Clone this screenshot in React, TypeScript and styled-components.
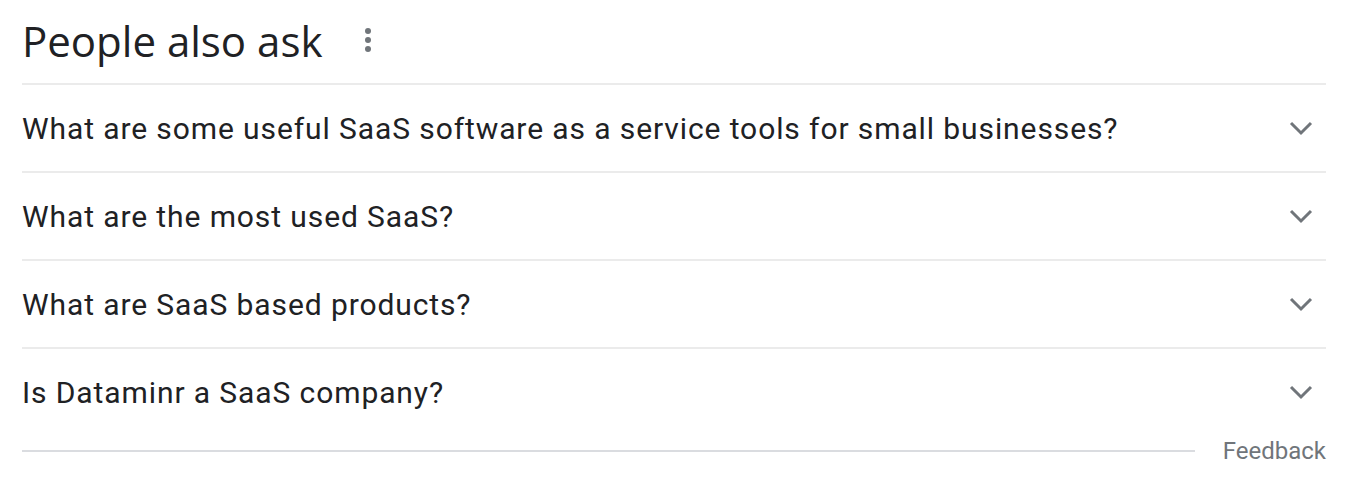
import styled, { createGlobalStyle } from 'styled-components';

const GlobalStyle = createGlobalStyle`
  body {
    margin: 0;
    background: #fff;
    font-family: Roboto, Arial, sans-serif;
  }
`;

const Wrapper = styled.section`
  width: 1304px;
  padding-left: 22px;
`;

const Header = styled.div`
  display: flex;
  align-items: center;
  height: 83px;
  border-bottom: 2px solid #ebebeb;
`;

const Title = styled.h2`
  margin: 0 0 2px 0;
  font-family: 'Open Sans', Roboto, sans-serif;
  font-weight: 400;
  font-size: 42px;
  color: #202124;
`;

const MoreButton = styled.button`
  display: flex;
  align-items: center;
  justify-content: center;
  margin-left: 30px;
  margin-bottom: 4px;
  width: 32px;
  height: 32px;
  padding: 0;
  border: none;
  background: none;
`;

const Question = styled.div`
  display: flex;
  align-items: center;
  justify-content: space-between;
  height: 86px;
  border-bottom: 2px solid #ebebeb;

  &:last-of-type {
    border-bottom: none;
  }
`;

const QuestionText = styled.span`
  font-size: 30px;
  letter-spacing: 0.9px;
  color: #202124;
`;

const Chevron = styled.svg`
  width: 24px;
  height: 16px;
  margin-right: 13px;
`;

const Footer = styled.div`
  display: flex;
  align-items: center;
  gap: 28px;
  margin-top: 2px;
`;

const Rule = styled.div`
  flex: 1;
  height: 2px;
  background: #dadce0;
`;

const Feedback = styled.span`
  font-size: 24px;
  color: #70757a;
`;

const questions = [
  'What are some useful SaaS software as a service tools for small businesses?',
  'What are the most used SaaS?',
  'What are SaaS based products?',
  'Is Dataminr a SaaS company?',
];

const Dots = () => (
  <svg width="8" height="26" viewBox="0 0 8 26">
    <circle cx="4" cy="4" r="3" fill="#70757a" />
    <circle cx="4" cy="13" r="3" fill="#70757a" />
    <circle cx="4" cy="22" r="3" fill="#70757a" />
  </svg>
);

const App = () => (
  <Wrapper>
    <GlobalStyle />
    <Header>
      <Title>People also ask</Title>
      <MoreButton aria-label="More options">
        <Dots />
      </MoreButton>
    </Header>
    <div>
      {questions.map((q) => (
        <Question key={q}>
          <QuestionText>{q}</QuestionText>
          <Chevron viewBox="0 0 24 16">
            <path d="M2 3 L12 13 L22 3" fill="none" stroke="#70757a" strokeWidth="3" />
          </Chevron>
        </Question>
      ))}
    </div>
    <Footer>
      <Rule />
      <Feedback>Feedback</Feedback>
    </Footer>
  </Wrapper>
);

export default App;
